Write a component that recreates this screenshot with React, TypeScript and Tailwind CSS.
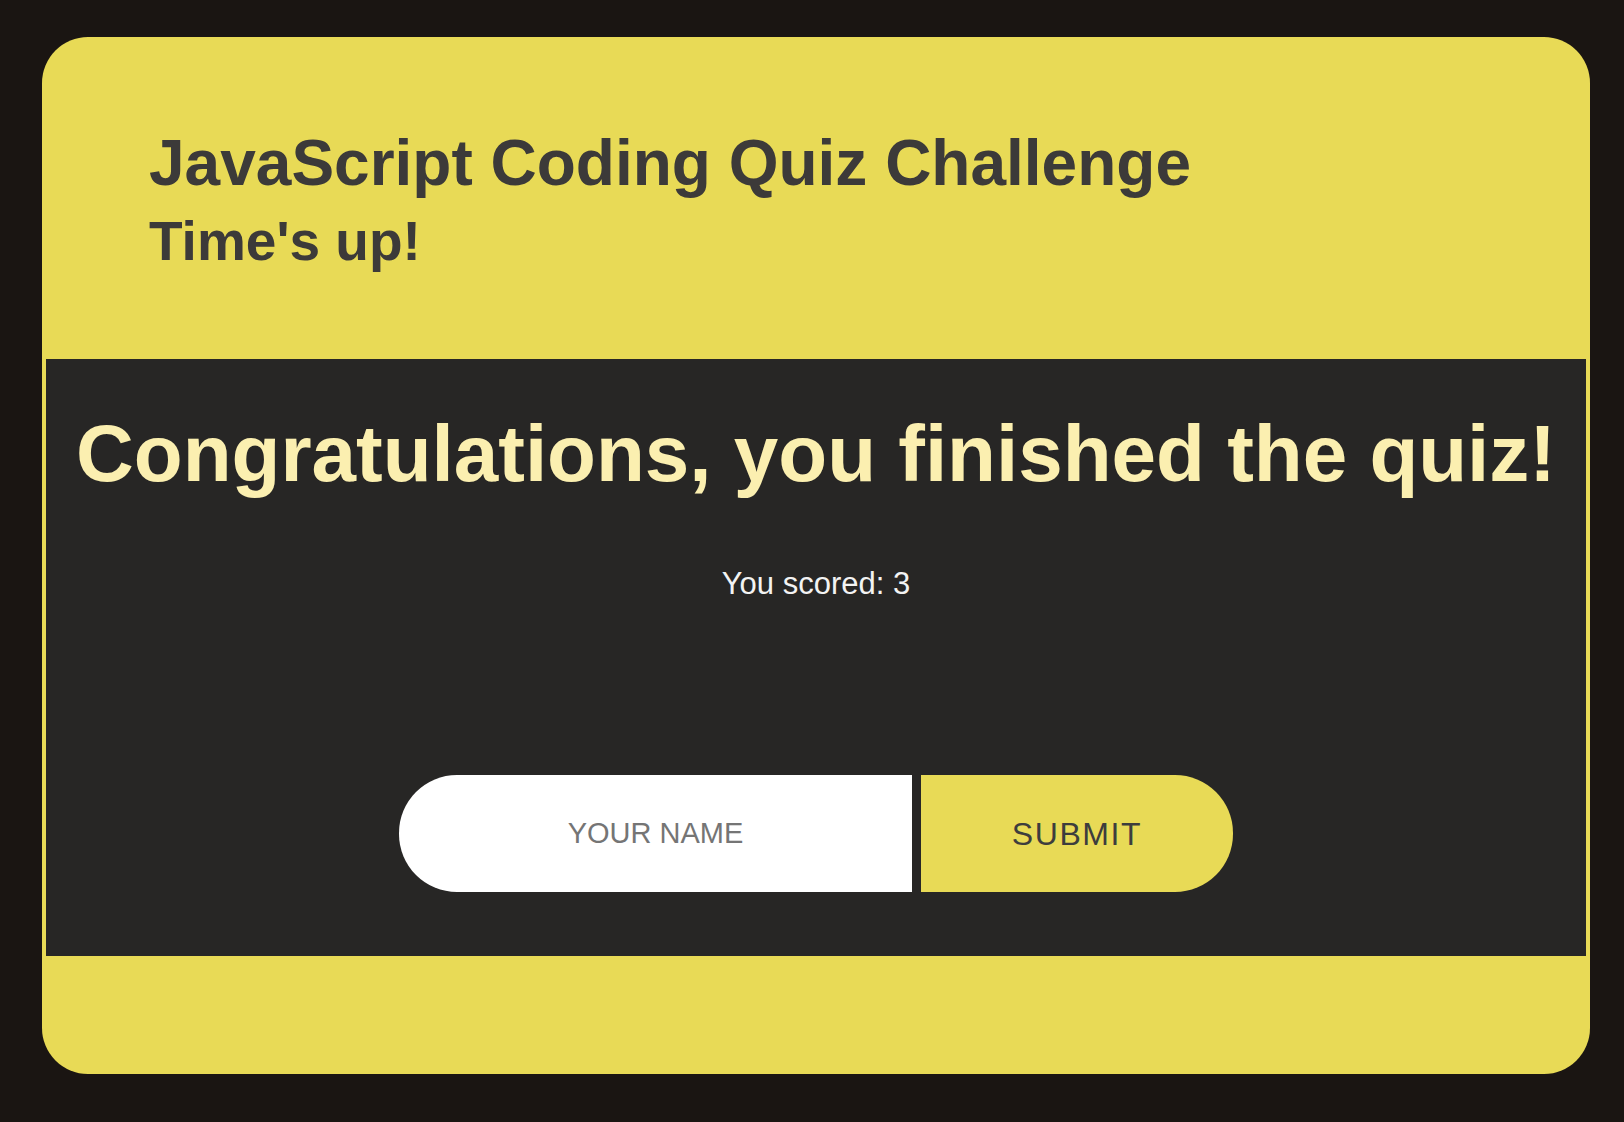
import { useState } from "react";

export default function App() {
  const [name, setName] = useState("");
  const score = 3;

  return (
    <div className="min-h-[1122px] w-full bg-[#1a1512] pt-[37px] pl-[42px] font-['Liberation_Sans',Arial,sans-serif]">
      <div className="w-[1548px] h-[1037px] rounded-[46px] bg-[#e8da56] flex flex-col">
        {/* HEADER */}
        <header className="h-[322px] pt-[90px] pl-[107px] text-[#3c3a39] font-bold">
          <h1 className="text-[64px] leading-[72px]">JavaScript Coding Quiz Challenge</h1>
          <h2 className="mt-[12px] text-[55px] leading-[60px]">Time's up!</h2>
        </header>

        {/* RESULT PANEL */}
        <section className="mx-[4px] h-[597px] bg-[#272625] flex flex-col items-center pt-[49px]">
          <h2 className="text-[80px] leading-[92px] font-bold text-[#fbefb0]">
            Congratulations, you finished the quiz!
          </h2>
          <p className="mt-[66px] text-[31px] leading-[36px] text-[#f3f3f3]">
            You scored: {score}
          </p>
          <form
            className="mt-[173px] flex gap-[9px]"
            onSubmit={(e) => e.preventDefault()}
          >
            <input
              value={name}
              onChange={(e) => setName(e.target.value)}
              placeholder="YOUR NAME"
              className="w-[513px] h-[117px] rounded-l-[58px] bg-white text-center text-[29px] text-[#3c3a39] placeholder:text-[#757575] outline-none"
            />
            <button
              type="submit"
              className="w-[312px] h-[117px] rounded-r-[58px] bg-[#e8da56] text-[32px] tracking-[0.05em] text-[#3d3d3d]"
            >
              SUBMIT
            </button>
          </form>
        </section>
      </div>
    </div>
  );
}
